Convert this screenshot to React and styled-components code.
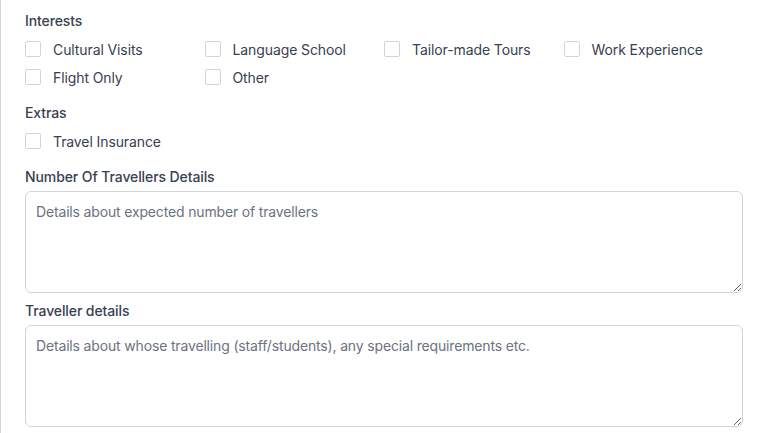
import React from "react";
import styled, { createGlobalStyle } from "styled-components";

const GlobalStyle = createGlobalStyle`
  html, body {
    margin: 0;
    padding: 0;
    background: #ffffff;
  }
  body {
    font-family: Inter, "Noto Sans", sans-serif;
    -webkit-font-smoothing: antialiased;
  }
`;

const interests = [
  "Cultural Visits",
  "Language School",
  "Tailor-made Tours",
  "Work Experience",
  "Flight Only",
  "Other",
];

export default function App() {
  return (
    <>
      <GlobalStyle />
      <Page>
        <Form onSubmit={(e) => e.preventDefault()}>
          <Section>
            <Label>Interests</Label>
            <CheckGrid>
              {interests.map((item) => (
                <CheckRow key={item}>
                  <Checkbox type="checkbox" />
                  <span>{item}</span>
                </CheckRow>
              ))}
            </CheckGrid>
          </Section>

          <Section>
            <Label>Extras</Label>
            <CheckGrid>
              <CheckRow>
                <Checkbox type="checkbox" />
                <span>Travel Insurance</span>
              </CheckRow>
            </CheckGrid>
          </Section>

          <Section $gap={8}>
            <Label>Number Of Travellers Details</Label>
            <TextArea placeholder="Details about expected number of travellers" />
          </Section>

          <Section $gap={8}>
            <Label>Traveller details</Label>
            <TextArea placeholder="Details about whose travelling (staff/students), any special requirements etc." />
          </Section>
        </Form>
      </Page>
    </>
  );
}

const Page = styled.div`
  min-height: 433px;
  border-left: 1px solid #d1d5db;
  box-sizing: border-box;
  padding: 11px 23px 0 24px;
`;

const Form = styled.form`
  display: flex;
  flex-direction: column;
`;

const Section = styled.div`
  display: flex;
  flex-direction: column;
  gap: 4px;
  margin-bottom: ${(p) => p.$gap ?? 12}px;
`;

const Label = styled.div`
  font-size: 14px;
  line-height: 20px;
  font-weight: 500;
  color: #374151;
  letter-spacing: -0.1px;
`;

const CheckGrid = styled.div`
  display: grid;
  grid-template-columns: repeat(4, 1fr);
`;

const CheckRow = styled.label`
  display: flex;
  align-items: center;
  gap: 12px;
  height: 28px;
  font-size: 14px;
  color: #374151;
  letter-spacing: -0.1px;
  cursor: pointer;
`;

const Checkbox = styled.input`
  appearance: none;
  -webkit-appearance: none;
  margin: 0;
  width: 16px;
  height: 16px;
  flex-shrink: 0;
  border: 1px solid #d1d5db;
  border-radius: 2px;
  background: #ffffff;
  box-sizing: border-box;
  cursor: pointer;

  &:checked {
    background: #2563eb;
    border-color: #2563eb;
  }
`;

const TextArea = styled.textarea`
  display: block;
  width: 100%;
  height: 102px;
  box-sizing: border-box;
  padding: 10px 10px;
  border: 1px solid #d1d5db;
  border-radius: 6px;
  font-family: Inter, "Noto Sans", sans-serif;
  font-size: 14px;
  line-height: 20px;
  letter-spacing: -0.16px;
  color: #111827;
  resize: vertical;

  &::placeholder {
    color: #6b7280;
  }

  &:focus {
    outline: none;
    border-color: #93c5fd;
  }
`;
